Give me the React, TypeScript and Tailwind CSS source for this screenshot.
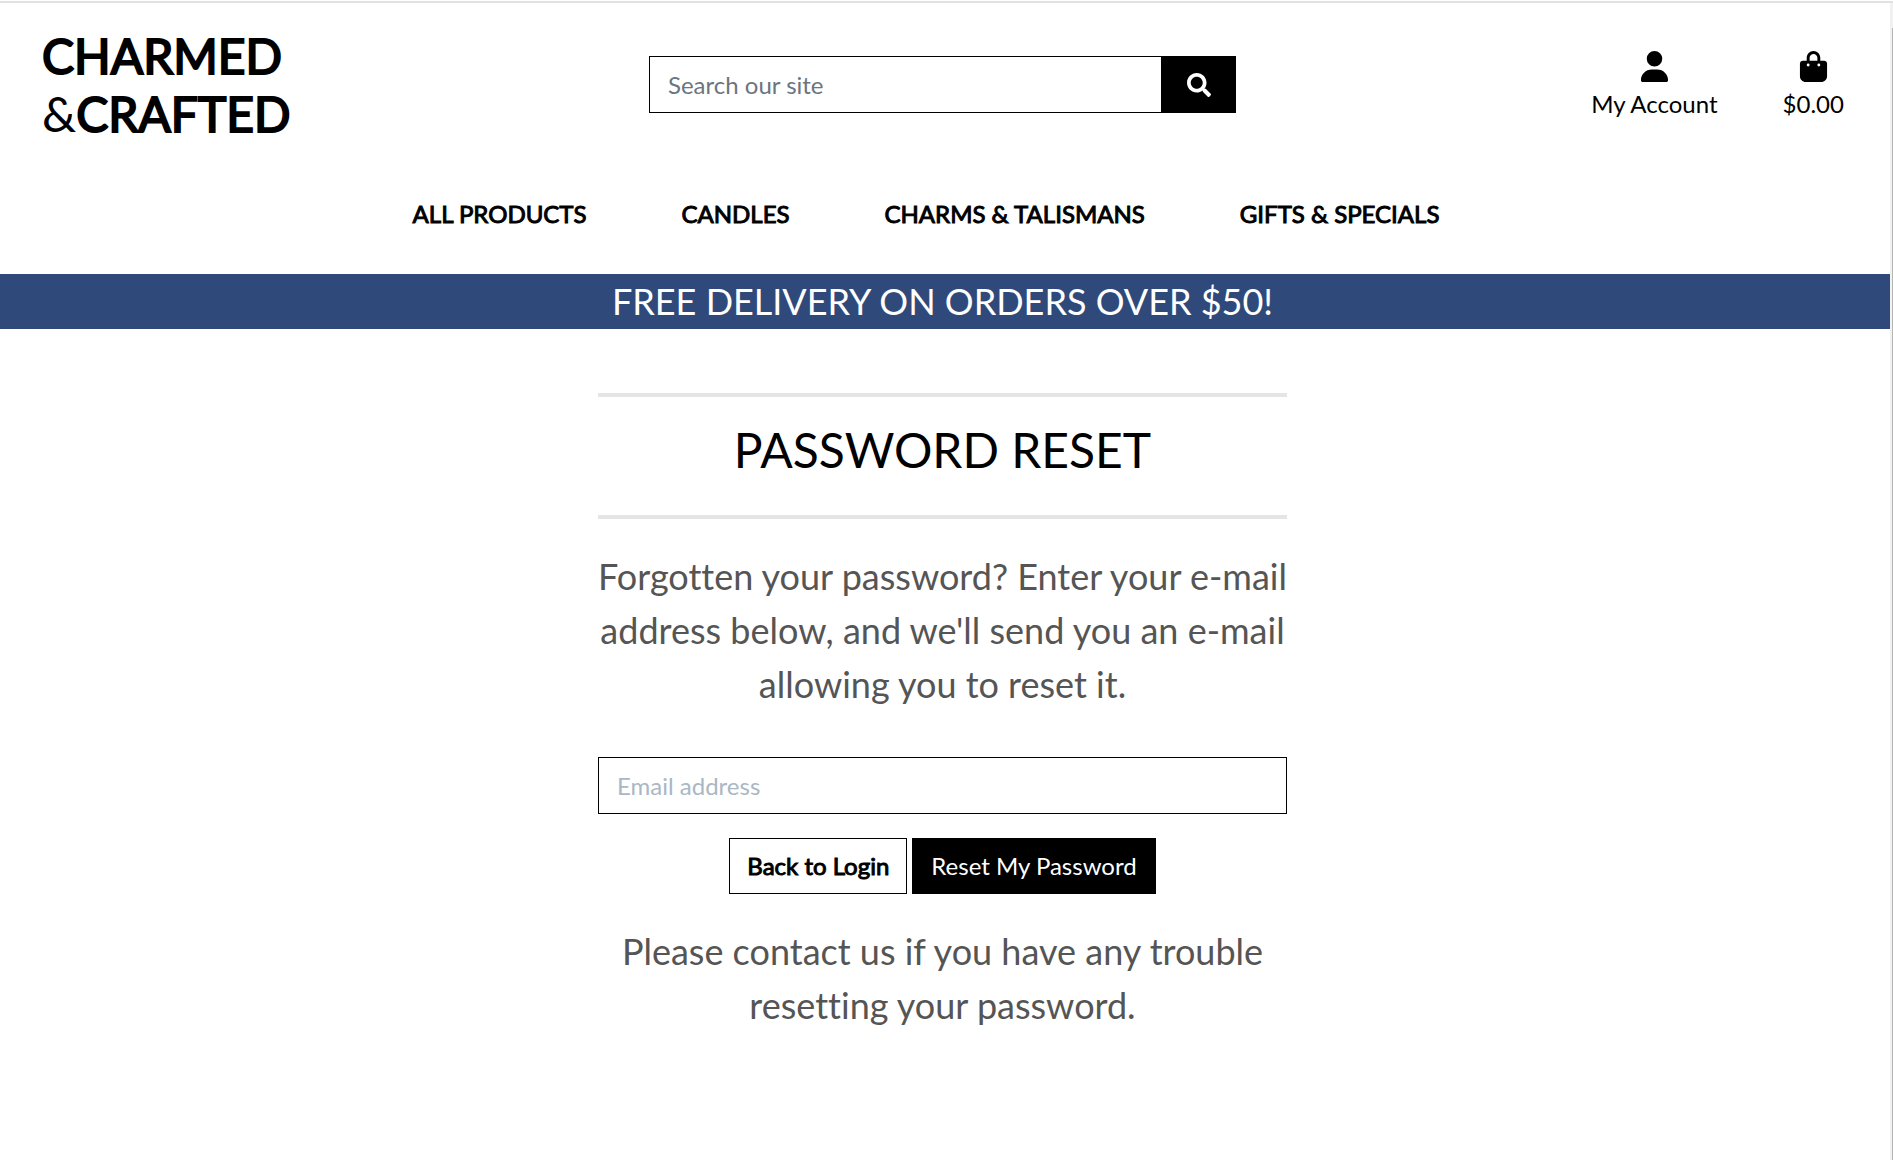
import React from "react";
import { FaUser, FaBagShopping } from "react-icons/fa6";
import { FaSearch } from "react-icons/fa";

const navLinks = ["ALL PRODUCTS", "CANDLES", "CHARMS & TALISMANS", "GIFTS & SPECIALS"];

function Header() {
  return (
    <header className="bg-white">
      <div className="flex items-start pt-6">
        <div className="w-1/3 pl-[42px]">
          <a href="#home" className="block text-5xl leading-[58px]">
            <span className="[-webkit-text-stroke:2px_black]">CHARMED</span>
            <br />
            &amp;<span className="[-webkit-text-stroke:2px_black]">CRAFTED</span>
          </a>
        </div>
        <form className="mt-[29px] flex h-[57px] w-1/3 pr-6 pl-[19px]" onSubmit={(e) => e.preventDefault()}>
          <input
            type="text"
            aria-label="Search our site"
            placeholder="Search our site"
            className="min-w-0 flex-1 border border-black px-[18px] placeholder:text-[#6c757d] outline-none"
          />
          <button type="submit" aria-label="Search" className="flex w-[74px] items-center justify-center bg-black text-white">
            <FaSearch size={24} />
          </button>
        </form>
        <div className="flex w-1/3 justify-end gap-[65px] pt-6 pr-[46px]">
          <a href="#account" className="flex flex-col items-center gap-1">
            <FaUser size={31} />
            <span className="leading-9">My Account</span>
          </a>
          <a href="#bag" className="flex flex-col items-center gap-1">
            <FaBagShopping size={31} />
            <span className="leading-9">$0.00</span>
          </a>
        </div>
      </div>
      <nav className="mt-[53px] flex justify-center gap-[95px] pr-[38px] leading-9">
        {navLinks.map((label) => (
          <a key={label} href="#shop" className="[-webkit-text-stroke:1px_black]">
            {label}
          </a>
        ))}
      </nav>
      <div className="mt-[42px] bg-[#2f4a7a] pr-[5px] text-center text-4xl leading-[55px] text-white">
        FREE DELIVERY ON ORDERS OVER $50!
      </div>
    </header>
  );
}

function PasswordReset() {
  return (
    <main className="flex justify-center pt-16 pr-[5px] pb-12">
      <div className="w-[689px] text-center">
        <hr className="border-t-4 border-[#e5e5e5]" />
        <h1 className="pt-6 pb-9 text-5xl leading-[58px]">PASSWORD RESET</h1>
        <hr className="border-t-4 border-[#e5e5e5]" />
        <p className="mt-[30px] text-4xl leading-[54px] text-[#555555]">
          Forgotten your password? Enter your e-mail address below, and we'll send you an e-mail allowing you to reset it.
        </p>
        <form className="mt-[46px]" onSubmit={(e) => e.preventDefault()}>
          <input
            type="email"
            aria-label="Email address"
            placeholder="Email address"
            className="block h-[57px] w-full border border-black px-[18px] placeholder:text-[#aab7c4] outline-none"
          />
          <div className="mt-6 flex h-14 justify-center gap-[5px]">
            <a href="#login" className="flex items-center border border-black px-[17px] [-webkit-text-stroke:1px_black]">
              Back to Login
            </a>
            <button type="submit" className="bg-black px-[19px] text-white">
              Reset My Password
            </button>
          </div>
        </form>
        <p className="mt-[30px] text-4xl leading-[54px] text-[#555555]">
          Please contact us if you have any trouble resetting your password.
        </p>
      </div>
    </main>
  );
}

export default function App() {
  return (
    <div className="flex min-h-screen flex-col bg-white font-['Lato',sans-serif] text-2xl text-black [font-variant-ligatures:none]">
      <div className="mt-px h-0.5 bg-[#dee2e2]" />
      <div className="flex flex-1">
        <div className="min-w-0 flex-1">
          <Header />
          <PasswordReset />
        </div>
        <div className="flex w-[3px] justify-end bg-[#f1f1f1] pt-[25px]">
          <div className="w-px bg-[#b5b5b5]" />
        </div>
      </div>
    </div>
  );
}
